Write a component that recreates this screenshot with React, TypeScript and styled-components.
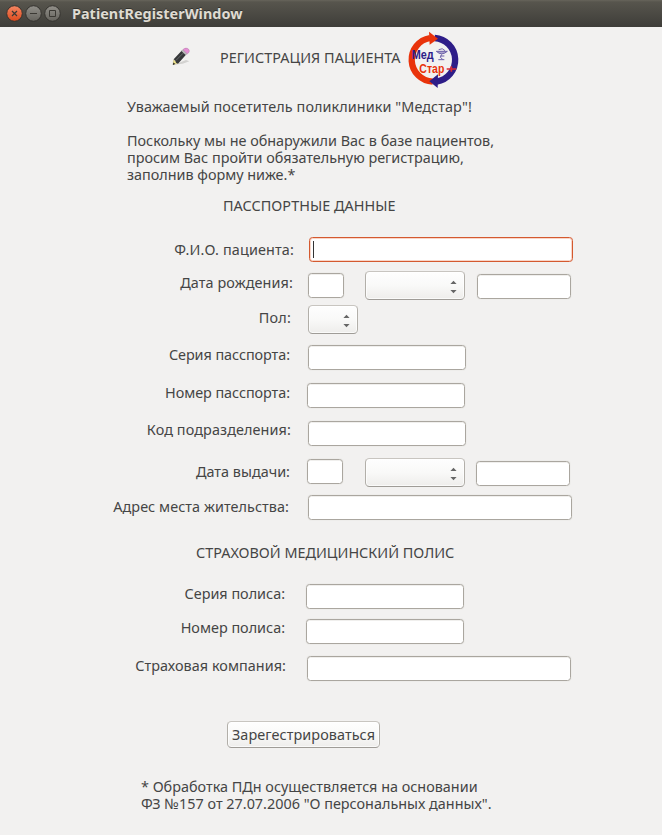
import React from 'react';
import styled, { createGlobalStyle, css } from 'styled-components';

const GlobalStyle = createGlobalStyle`
  * { box-sizing: border-box; }
  body {
    margin: 0;
    background: #f2f1f0;
    color: #454545;
    font: 14.4px/17px "Noto Sans", "Open Sans", sans-serif;
  }
`;

const Window = styled.div`
  display: flex;
  flex-direction: column;
  width: 662px;
  height: 835px;
  overflow: hidden;
  background: #f2f1f0;
`;

const TitleBar = styled.header`
  display: flex;
  align-items: center;
  flex: none;
  height: 27px;
  padding-left: 6px;
  background: linear-gradient(#67645b 0, #57554d 2px, #3e3d39 100%);
`;

const WindowButtons = styled.svg`
  display: block;
  flex: none;
`;

const Title = styled.h1`
  margin: 0 0 0 9px;
  font-size: 14.4px;
  line-height: 17px;
  font-weight: 700;
  letter-spacing: 0.03px;
  color: #dfdbd2;
  text-shadow: 0 -1px 0 #33322e;
`;

const Banner = styled.div`
  display: flex;
  align-items: flex-start;
  height: 71px;
`;

const PencilIcon = styled.svg`
  margin: 20px 0 0 171px;
`;

const BannerTitle = styled.h2`
  width: 187px;
  margin: 22px 0 0 29px;
  font: inherit;
  letter-spacing: 0.03px;
  white-space: nowrap;
`;

const Logo = styled.svg`
  margin-top: 4px;
`;

const Paragraph = styled.p<{ $left: number; $track?: number }>`
  margin: 0 0 0 ${p => p.$left}px;
  letter-spacing: ${p => p.$track ?? 0}px;
  white-space: pre;
`;

const Heading = styled.h3<{ $left: number; $gap: number; $track: number }>`
  margin: ${p => p.$gap}px 0 23px ${p => p.$left}px;
  font: inherit;
  letter-spacing: ${p => p.$track}px;
  white-space: nowrap;
`;

const FormRow = styled.div<{ $gap?: number }>`
  display: flex;
  align-items: flex-start;
  margin-top: ${p => p.$gap ?? 0}px;
`;

const Label = styled.label<{ $width: number; $drop: number; $track?: number }>`
  flex: none;
  width: ${p => p.$width}px;
  margin-top: ${p => p.$drop}px;
  letter-spacing: ${p => p.$track ?? 0}px;
  text-align: right;
  white-space: nowrap;
`;

const Entry = styled.div<{ $width: number; $gap: number; $drop?: number; $focused?: boolean }>`
  flex: none;
  width: ${p => p.$width}px;
  height: 25px;
  margin: ${p => p.$drop ?? 0}px 0 0 ${p => p.$gap}px;
  padding: 3px;
  border: 1px solid #aaa69f;
  border-radius: 3.5px;
  background: #fff;
  box-shadow: inset 0 1px 0 #f0efed, 0 0 0 1px #eeedeb;
  ${p => p.$focused && css`
    border-color: #d4592f;
    box-shadow: inset 0 0 0 1px #f8d5c8;
  `}
`;

const Caret = styled.div`
  width: 1px;
  height: 17px;
  background: #333;
`;

const raised = css`
  border: 1px solid #b2afa9;
  border-top-color: #c8c5c0;
  border-bottom-color: #9f9c97;
  border-radius: 4.5px;
  background: linear-gradient(#fefefe, #f9f9f8 50%, #eeedeb);
  box-shadow: inset 0 0 0 1px rgba(255, 255, 255, 0.7);
`;

const Combo = styled.div<{ $width: number; $gap: number }>`
  display: flex;
  justify-content: flex-end;
  flex: none;
  width: ${p => p.$width}px;
  height: 29px;
  margin-left: ${p => p.$gap}px;
  padding: 8px 7px 0 0;
  ${raised}
`;

const SubmitButton = styled.button`
  display: block;
  width: 153px;
  height: 27px;
  margin: 40px 0 30px 227px;
  padding: 0;
  font: inherit;
  line-height: 25px;
  letter-spacing: 0.08px;
  color: #454545;
  white-space: nowrap;
  ${raised}
`;

function Select({ width, gap }: { width: number; gap: number }) {
  return (
    <Combo $width={width} $gap={gap}>
      <svg width="7" height="14" viewBox="0 0 7 14">
        <path d="M3.5 .8 6.6 4H.4Z M.4 10H6.6L3.5 13.2Z" fill="#666" />
      </svg>
    </Combo>
  );
}

function Controls() {
  return (
    <WindowButtons width="57" height="19" viewBox="6 4 57 19">
      <defs>
        <linearGradient id="close" x2="0" y2="1">
          <stop stopColor="#f58763" />
          <stop offset="1" stopColor="#dc4a1d" />
        </linearGradient>
        <linearGradient id="plain" x2="0" y2="1">
          <stop stopColor="#92908a" />
          <stop offset="1" stopColor="#65635d" />
        </linearGradient>
      </defs>
      <g stroke="#35332f" strokeWidth="1">
        <circle cx="14.5" cy="13.5" r="7.8" fill="url(#close)" />
        <circle cx="33.5" cy="13.5" r="7.8" fill="url(#plain)" />
        <circle cx="52.5" cy="13.5" r="7.8" fill="url(#plain)" />
      </g>
      <g fill="none" stroke="#3b3934" strokeWidth="1.2">
        <path d="M12 11l5 5M17 11l-5 5" />
        <path d="M30 13.5h7" strokeWidth="1" />
        <path d="M49.5 10.5h6v6h-6z" strokeWidth="1" />
      </g>
    </WindowButtons>
  );
}

function Pencil() {
  return (
    <PencilIcon width="20" height="20" viewBox="33 57 60 60">
      <path d="M42 110 78 96 88 100 68 107Z" fill="#d3d2d0" />
      <path d="M39 110 41 95 53 106Z" fill="#f1e58a" stroke="#a89c58" />
      <path d="M38.500 111 40 103.500 46 108Z" fill="#222" />
      <path d="M41 94 67 66 80 78 54 107 48 104 46 98Z" fill="#37383a" />
      <path d="M48 97 73 72" stroke="#707274" strokeWidth="2.500" />
      <path d="M64 69 69 64 82 76 77 81Z" fill="#bcbcbc" />
      <path d="M69 65C74 59 82 59 86 64S88 73 82 78Z" fill="#e490d4" stroke="#9c6893" />
    </PencilIcon>
  );
}

function MedstarLogo() {
  return (
    <Logo width="54" height="58" viewBox="51 9 162 174">
      <g fill="none" strokeWidth="19">
        <path d="M128 161A66 66 0 0 1 120 30" stroke="#e9330b" />
        <path d="M134 30A66 66 0 0 1 140 161" stroke="#2e1d88" />
      </g>
      <path d="M117 11 144 32 119 50Z" fill="#e9330b" />
      <path d="M144 139 118 160 143 180Z" fill="#2e1d88" />
      <g fontFamily="'Liberation Sans', Arial, sans-serif" fontWeight="700">
        <text x="65" y="94" fontSize="41" textLength="66" lengthAdjust="spacingAndGlyphs" fill="#2e1d88">Мед</text>
        <text x="88" y="135" fontSize="41" textLength="75" lengthAdjust="spacingAndGlyphs" fill="#e9330b">Стар</text>
      </g>
      <path d="M170 123H199M184 115V131" stroke="#d92a35" strokeWidth="5" />
      <g fill="none" stroke="#6d61a9" strokeWidth="3">
        <path d="M139 70Q155 85 172 70Z" fill="#aaa3cc" />
        <path d="M146 65Q158 58 165 68M155 79 151 88 158 94M145 95H163M151 84H163" />
      </g>
    </Logo>
  );
}

export default function App() {
  return (
    <>
      <GlobalStyle />
      <Window>
        <TitleBar>
          <Controls />
          <Title>PatientRegisterWindow</Title>
        </TitleBar>

        <Banner>
          <Pencil />
          <BannerTitle>РЕГИСТРАЦИЯ ПАЦИЕНТА</BannerTitle>
          <MedstarLogo />
        </Banner>

        <Paragraph $left={127} $track={0.08}>{'Уважаемый посетитель поликлиники "Медстар"!\n\n'}</Paragraph>
        <Paragraph $left={127} $track={-0.01}>
          {'Поскольку мы не обнаружили Вас в базе пациентов,\nпросим Вас пройти обязательную регистрацию,\nзаполнив форму ниже.*'}
        </Paragraph>

        <Heading $left={223} $gap={14} $track={0.05}>ПАССПОРТНЫЕ ДАННЫЕ</Heading>
        <FormRow>
          <Label $width={294} $drop={4} $track={0.14}>Ф.И.О. пациента:</Label>
          <Entry $width={264} $gap={15} $focused><Caret /></Entry>
        </FormRow>
        <FormRow $gap={9}>
          <Label $width={293} $drop={3} $track={0.11}>Дата рождения:</Label>
          <Entry $width={36} $gap={15} $drop={2} />
          <Select width={100} gap={21} />
          <Entry $width={94} $gap={12} $drop={3} />
        </FormRow>
        <FormRow $gap={5}>
          <Label $width={291} $drop={4} $track={0.2}>Пол:</Label>
          <Select width={50} gap={17} />
        </FormRow>
        <FormRow $gap={11}>
          <Label $width={290} $drop={1} $track={-0.06}>Серия пасспорта:</Label>
          <Entry $width={158} $gap={18} />
        </FormRow>
        <FormRow $gap={13}>
          <Label $width={290} $drop={1} $track={-0.06}>Номер пасспорта:</Label>
          <Entry $width={158} $gap={17} />
        </FormRow>
        <FormRow $gap={13}>
          <Label $width={291} $drop={0} $track={0.11}>Код подразделения:</Label>
          <Entry $width={158} $gap={17} />
        </FormRow>
        <FormRow $gap={12}>
          <Label $width={290} $drop={5} $track={0.02}>Дата выдачи:</Label>
          <Entry $width={36} $gap={17} $drop={1} />
          <Select width={100} gap={22} />
          <Entry $width={94} $gap={11} $drop={3} />
        </FormRow>
        <FormRow $gap={8}>
          <Label $width={289} $drop={3} $track={0.06}>Адрес места жительства:</Label>
          <Entry $width={264} $gap={19} />
        </FormRow>

        <Heading $left={196} $gap={24} $track={0}>СТРАХОВОЙ МЕДИЦИНСКИЙ ПОЛИС</Heading>
        <FormRow>
          <Label $width={285} $drop={1}>Серия полиса:</Label>
          <Entry $width={158} $gap={21} />
        </FormRow>
        <FormRow $gap={10}>
          <Label $width={285} $drop={0}>Номер полиса:</Label>
          <Entry $width={158} $gap={21} />
        </FormRow>
        <FormRow $gap={12}>
          <Label $width={286} $drop={1} $track={0.05}>Страховая компания:</Label>
          <Entry $width={264} $gap={21} />
        </FormRow>

        <SubmitButton type="button">Зарегестрироваться</SubmitButton>
        <Paragraph $left={141}>
          {'* Обработка ПДн осуществляется на основании\nФЗ №157 от 27.07.2006 "О персональных данных".'}
        </Paragraph>
      </Window>
    </>
  );
}
